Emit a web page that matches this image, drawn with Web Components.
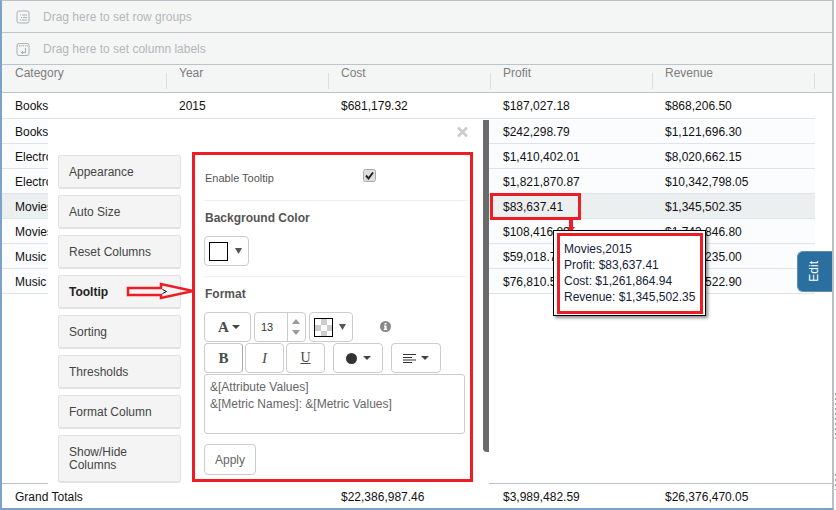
<!DOCTYPE html>
<html>
<head>
<meta charset="utf-8">
<title>Pivot grid tooltip settings</title>
<style>
  html, body { margin: 0; padding: 0; background: #fff; }
  body { font: 12px/14px "Liberation Sans", Arial, sans-serif; color: #111; overflow: hidden; }
</style>
</head>
<body>
<pivot-page>
  <drop-bar kind="rows">Drag here to set row groups</drop-bar>
  <drop-bar kind="columns">Drag here to set column labels</drop-bar>
  <pivot-table></pivot-table>

  <format-dialog slot="overlay">
    <menu-button slot="menu">Appearance</menu-button>
    <menu-button slot="menu">Auto Size</menu-button>
    <menu-button slot="menu">Reset Columns</menu-button>
    <menu-button slot="menu" active>Tooltip</menu-button>
    <menu-button slot="menu">Sorting</menu-button>
    <menu-button slot="menu">Thresholds</menu-button>
    <menu-button slot="menu">Format Column</menu-button>
    <menu-button slot="menu" tall>Show/Hide Columns</menu-button>
    <tooltip-settings></tooltip-settings>
  </format-dialog>

  <callout-marks slot="overlay"></callout-marks>
  <cell-tooltip slot="overlay">
    <div>Movies,2015</div>
    <div>Profit: $83,637.41</div>
    <div>Cost: $1,261,864.94</div>
    <div>Revenue: $1,345,502.35</div>
  </cell-tooltip>
  <edit-tab slot="overlay">Edit</edit-tab>
</pivot-page>

<script>
class PivotPage extends HTMLElement {
  constructor() {
    super();
    this.attachShadow({ mode: 'open' });
    this.shadowRoot.innerHTML = `
      <style>
        :host { display: block; position: relative; width: 836px; height: 510px; overflow: hidden; }
        .frame {
          box-sizing: border-box;
          width: 834px;
          height: 510px;
          display: flex;
          flex-direction: column;
          border-top: 1px solid #b9c0c5;
          border-left: 2px solid #7ba2c8;
          border-right: 2px solid #b9c0c5;
          border-bottom: 2px solid #7ba2c8;
        }
        .noise { position: absolute; left: 835px; width: 1px; background: repeating-linear-gradient(#a89a8c 0 2px, #fff 2px 5px); }
      </style>
      <div class="frame"><slot></slot></div>
      <slot name="overlay"></slot>
      <div class="noise" style="top:393px;height:46px"></div>
      <div class="noise" style="top:474px;height:16px"></div>
    `;
  }
}

class DropBar extends HTMLElement {
  constructor() {
    super();
    this.attachShadow({ mode: 'open' });
  }

  connectedCallback() {
    const rows = `
      <rect x="1" y="1" width="12" height="12" rx="2" fill="none" stroke="#a9b0b0"/>
      <path d="M4 5h1M6 5h5M5 7.5h1M7 7.5h4M4 10h1M6 10h5" stroke="#a9b0b0" fill="none"/>`;
    const columns = `
      <rect x="1" y="1.500" width="12" height="12" rx="2" fill="none" stroke="#a9b0b0"/>
      <path d="M1 4h12M4 1v3M7 1v3M10 1v3" stroke="#a9b0b0" stroke-dasharray="1 1" fill="none"/>
      <path d="M9.500 6v4.500H5.500M7 9l-1.500 1.500L7 12" stroke="#a9b0b0" fill="none"/>`;
    this.shadowRoot.innerHTML = `
      <style>
        :host {
          box-sizing: border-box;
          display: flex;
          align-items: center;
          gap: 13px;
          height: 32px;
          padding: 1px 0 0 14px;
          background: #f4f6f6;
          border-bottom: 1px solid #b9c4cc;
          color: #b3b6b8;
        }
        svg { width: 14px; height: 15px; flex: none; }
      </style>
      <svg viewBox="0 0 14 15">${this.getAttribute('kind') === 'rows' ? rows : columns}</svg>
      <slot></slot>
    `;
  }
}

class PivotTable extends HTMLElement {
  constructor() {
    super();
    this.attachShadow({ mode: 'open' });
  }

  connectedCallback() {
    const rows = [
      ['Books', '2015', '$681,179.32', '$187,027.18', '$868,206.50'],
      ['Books', '', '', '$242,298.79', '$1,121,696.30'],
      ['Electronics', '', '', '$1,410,402.01', '$8,020,662.15'],
      ['Electronics', '', '', '$1,821,870.87', '$10,342,798.05'],
      ['Movies', '', '', '$83,637.41', '$1,345,502.35'],
      ['Movies', '', '', '$108,416.89', '$1,743,846.80'],
      ['Music', '', '', '$59,018.72', '$1,281,235.00'],
      ['Music', '', '', '$76,810.53', '$1,105,522.90']
    ];
    const cells = (row) => row.map((text) => `<div class="cell">${text}</div>`).join('');
    this.shadowRoot.innerHTML = `
      <style>
        :host { display: flex; flex-direction: column; flex: 1; min-height: 0; background: #fff; }
        .line { display: grid; grid-template-columns: 165px repeat(4, 162px); }
        .cell { padding-left: 12px; }
        .cell:first-child { padding-left: 13px; }
        .head {
          height: 27px;
          background: #f4f6f6;
          border-bottom: 1px solid #b9c4cc;
          color: #7c7c7c;
        }
        .head .cell {
          padding-top: 1px;
          background: linear-gradient(#dcdfe0, #dcdfe0) right 8px / 1px 16px no-repeat;
        }
        .row {
          box-sizing: border-box;
          width: 813px;
          height: 25px;
          padding-top: 1px;
          align-items: center;
          border-bottom: 1px solid #dfe4e8;
          background: #fbfcfe;
        }
        .head + .row { height: 26px; background: #fff; }
        .row.hot { background: #eceff0; }
        .spacer { flex: 1; }
        .totals {
          height: 25px;
          padding-top: 2px;
          box-sizing: border-box;
          align-items: center;
          border-top: 1px solid #b9c0c5;
        }
      </style>
      <div class="line head">${cells(['Category', 'Year', 'Cost', 'Profit', 'Revenue'])}</div>
      ${rows.map((row, i) => `<div class="line row${i === 4 ? ' hot' : ''}">${cells(row)}</div>`).join('')}
      <div class="spacer"></div>
      <div class="line totals">${cells(['Grand Totals', '', '$22,386,987.46', '$3,989,482.59', '$26,376,470.05'])}</div>
    `;
  }
}

class FormatDialog extends HTMLElement {
  constructor() {
    super();
    this.attachShadow({ mode: 'open' });
    this.shadowRoot.innerHTML = `
      <style>
        :host {
          position: absolute;
          left: 48px;
          top: 120px;
          width: 441px;
          height: 364px;
          display: flex;
          background: #fff;
        }
        .main { position: relative; display: flex; gap: 11px; width: 435px; padding: 32px 0 0 10px; box-sizing: border-box; }
        .menu { display: flex; flex-direction: column; gap: 6px; width: 123px; padding-top: 3px; }
        .close { position: absolute; left: 409px; top: 6px; width: 11px; height: 12px; }
        .scroll { width: 6px; height: 332px; background: #6b6b6b; border-radius: 0 0 0 4px; }
      </style>
      <div class="main">
        <svg class="close" viewBox="0 0 11 12"><path d="M1 1.500l9 9M10 1.500l-9 9" stroke="#ccc" stroke-width="2.600" fill="none"/></svg>
        <div class="menu"><slot name="menu"></slot></div>
        <slot></slot>
      </div>
      <div class="scroll"></div>
    `;
  }
}

class MenuButton extends HTMLElement {
  constructor() {
    super();
    this.attachShadow({ mode: 'open' });
    this.shadowRoot.innerHTML = `
      <style>
        :host {
          box-sizing: border-box;
          display: flex;
          align-items: center;
          height: 34px;
          padding: 2px 10px 0 10px;
          background: #f4f4f4;
          border: 1px solid #e2e2e2;
          border-bottom-width: 2px;
          border-radius: 3px;
          color: #444;
          line-height: 13px;
        }
        :host([active]) { font-weight: bold; color: #222; }
        :host([tall]) { height: 48px; padding-top: 0; }
      </style>
      <slot></slot>
    `;
  }
}

class ToolButton extends HTMLElement {
  constructor() {
    super();
    this.attachShadow({ mode: 'open' });
    this.shadowRoot.innerHTML = `
      <style>
        :host {
          box-sizing: border-box;
          display: flex;
          align-items: center;
          justify-content: center;
          gap: 5px;
          height: 30px;
          border: 1px solid #ccc;
          border-radius: 4px;
          background: #fff;
          color: #444;
          flex: none;
        }
        :host([caret])::after {
          content: "";
          border: 4px solid transparent;
          border-top: 4px solid #444;
          border-bottom: 0;
        }
      </style>
      <slot></slot>
    `;
  }
}

class TooltipSettings extends HTMLElement {
  constructor() {
    super();
    this.attachShadow({ mode: 'open' });
    this.shadowRoot.innerHTML = `
      <style>
        :host {
          box-sizing: border-box;
          display: block;
          width: 281px;
          height: 330px;
          border: 3px solid #ee1c25;
          padding: 0 2px 0 9px;
          color: #555;
          background: #fff;
        }
        .enable {
          box-sizing: border-box;
          height: 46px;
          display: flex;
          padding-top: 16px;
          font-size: 11px;
          border-bottom: 1px solid #eee;
        }
        .enable span { width: 158px; padding-left: 1px; }
        .enable svg { width: 13px; height: 13px; margin-top: -2px; }
        h3 { margin: 10px 0 11px 1px; font-size: 12px; line-height: 14px; font-weight: bold; color: #555; }
        .swatch-btn { width: 45px; margin-bottom: 10px; padding-right: 2px; gap: 6px; }
        .swatch { width: 17px; height: 17px; border: 1px solid #000; background: #fff; }
        .checks { background: repeating-conic-gradient(#ccc 0 25%, #fff 0 50%) 0 0 / 12px 12px; }
        .divider { border-bottom: 1px solid #eee; }
        .bar { display: flex; height: 30px; margin-bottom: 1px; }
        .letter { font: bold 15px "Liberation Serif", "Times New Roman", serif; color: #4a4a4a; }
        .spin { width: 52px; justify-content: flex-start; gap: 0; }
        .spin b { font-weight: normal; font-size: 11px; color: #333; width: 33px; padding-left: 6px; box-sizing: border-box; }
        .arrows { width: 18px; height: 100%; border-left: 1px solid #ccc; display: flex; flex-direction: column; align-items: center; justify-content: center; gap: 6px; }
        .arrows i { border: 4px solid transparent; }
        .arrows i:first-child { border-top: 0; border-bottom: 5px solid #999; }
        .arrows i:last-child { border-bottom: 0; border-top: 5px solid #999; }
        .info { width: 11px; height: 11px; margin: 9px 0 0 24px; }
        .dot { width: 11px; height: 11px; border-radius: 50%; background: #333; }
        .text {
          box-sizing: border-box;
          width: 261px;
          height: 60px;
          border: 1px solid #ccc;
          border-radius: 3px;
          padding: 4px 5px;
          line-height: 17px;
          color: #666;
        }
        .apply { width: 52px; height: 31px; margin-top: 10px; color: #666; }
      </style>
      <div class="enable">
        <span>Enable Tooltip</span>
        <svg viewBox="0 0 13 13"><rect x=".5" y=".5" width="12" height="12" rx="2" fill="#dedede" stroke="#aaa"/><path d="M3 6.500l2.500 3L10 3.500" stroke="#222" stroke-width="2" fill="none"/></svg>
      </div>
      <h3>Background Color</h3>
      <tool-button class="swatch-btn"><div class="swatch"></div><svg width="9" height="8" viewBox="0 0 9 8"><path d="M1 1h7L4.500 7z" fill="#555"/></svg></tool-button>
      <div class="divider"></div>
      <h3>Format</h3>
      <div class="bar" style="gap:3px">
        <tool-button caret style="width:47px;gap:3px;padding-left:3px"><span class="letter">A</span></tool-button>
        <tool-button class="spin"><b>13</b><div class="arrows"><i></i><i></i></div></tool-button>
        <tool-button style="width:44px;gap:5px;padding-right:2px"><div class="swatch checks"></div><svg width="9" height="8" viewBox="0 0 9 8"><path d="M1 1h7L4.500 7z" fill="#555"/></svg></tool-button>
        <svg class="info" viewBox="0 0 11 11"><circle cx="5.500" cy="5.500" r="5.500" fill="#888"/><path d="M4.500 2h2v1.600h-2zM4 4.500h2.500v3.200h.7V9H3.800V7.700h.7V5.700H4z" fill="#fff"/></svg>
      </div>
      <div class="bar">
        <tool-button style="width:39px;border-right-color:#aaa"><span class="letter">B</span></tool-button>
        <tool-button style="width:39px;margin-left:2px"><span class="letter" style="font-style:italic;font-weight:normal">I</span></tool-button>
        <tool-button style="width:39px;margin-left:2px"><span class="letter" style="font-weight:normal;font-size:14px;text-decoration:underline">U</span></tool-button>
        <tool-button caret style="width:50px;margin-left:8px;gap:6px"><div class="dot"></div></tool-button>
        <tool-button caret style="width:50px;margin-left:8px"><svg width="13" height="9" viewBox="0 0 13 9"><path d="M0 .5h13M0 3.500h9M0 6h13M0 8.500h9" stroke="#333" fill="none"/></svg></tool-button>
      </div>
      <div class="text">&amp;[Attribute Values]<br>&amp;[Metric Names]: &amp;[Metric Values]</div>
      <tool-button class="apply">Apply</tool-button>
    `;
  }
}

class CalloutMarks extends HTMLElement {
  constructor() {
    super();
    this.attachShadow({ mode: 'open' });
    this.shadowRoot.innerHTML = `
      <style>
        :host { position: absolute; left: 0; top: 0; width: 836px; height: 510px; pointer-events: none; }
        svg { display: block; }
      </style>
      <svg width="836" height="510" viewBox="0 0 836 510">
        <path d="M128 288h33v-4l32 7-32 7v-3h-33z" fill="none" stroke="#ee1c25" stroke-width="2.500"/>
        <path d="M162.500 289.500l4 2-4 2" fill="none" stroke="#111"/>
        <rect x="491.500" y="194.500" width="88" height="24" fill="none" stroke="#ee1c25" stroke-width="3"/>
        <path d="M569 219h4v8h2l-3 4h-2l-3-4h2z" fill="#ee1c25"/>
      </svg>
    `;
  }
}

class CellTooltip extends HTMLElement {
  constructor() {
    super();
    this.attachShadow({ mode: 'open' });
    this.shadowRoot.innerHTML = `
      <style>
        :host {
          box-sizing: border-box;
          position: absolute;
          left: 553px;
          top: 230px;
          width: 153px;
          height: 86px;
          padding: 2px 2px 1px 3px;
          border: 1px solid #000;
          background: #fff;
          box-shadow: 2px 2px 3px rgba(0, 0, 0, 0.45);
          color: #16213a;
        }
        .inner {
          box-sizing: border-box;
          height: 100%;
          border: 3px solid #ee1c25;
          padding: 5px 0 0 4px;
          line-height: 16px;
          white-space: nowrap;
        }
      </style>
      <div class="inner"><slot></slot></div>
    `;
  }
}

class EditTab extends HTMLElement {
  constructor() {
    super();
    this.attachShadow({ mode: 'open' });
    this.shadowRoot.innerHTML = `
      <style>
        :host {
          box-sizing: border-box;
          position: absolute;
          left: 797px;
          top: 251px;
          width: 35px;
          height: 41px;
          display: flex;
          align-items: center;
          justify-content: center;
          background: #2a6f9f;
          border: 1px solid #5f8fb0;
          border-right: 0;
          border-radius: 6px 0 0 6px;
          color: #fff;
        }
        span { writing-mode: vertical-rl; transform: rotate(180deg); margin-right: 2px; }
      </style>
      <span><slot></slot></span>
    `;
  }
}

customElements.define('pivot-page', PivotPage);
customElements.define('drop-bar', DropBar);
customElements.define('pivot-table', PivotTable);
customElements.define('format-dialog', FormatDialog);
customElements.define('menu-button', MenuButton);
customElements.define('tool-button', ToolButton);
customElements.define('tooltip-settings', TooltipSettings);
customElements.define('callout-marks', CalloutMarks);
customElements.define('cell-tooltip', CellTooltip);
customElements.define('edit-tab', EditTab);
</script>
</body>
</html>
